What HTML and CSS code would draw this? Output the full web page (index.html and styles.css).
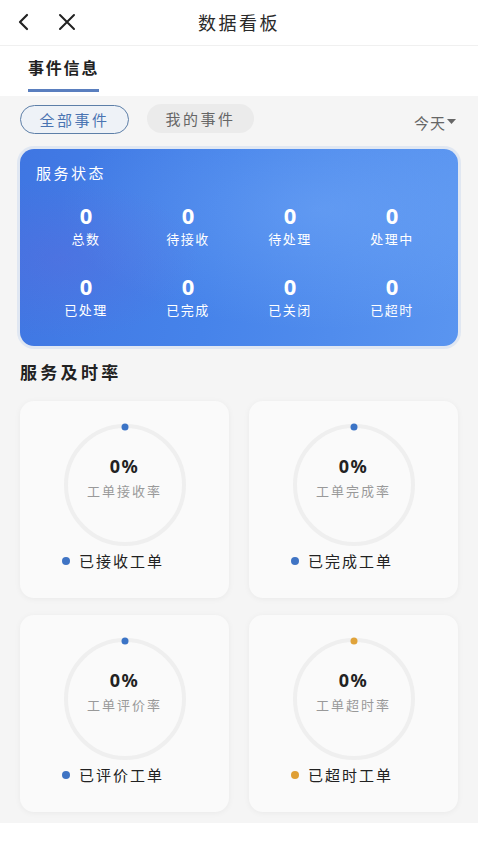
FILE: index.html
```html
<!DOCTYPE html>
<html lang="zh">
<head>
<meta charset="utf-8">
<title>数据看板</title>
<link rel="stylesheet" href="styles.css">
</head>
<body>
<header class="nav">
  <div class="nav-icons">
    <svg class="ico" width="16" height="18" viewBox="0 0 16 18"><path d="M11 2 L4 9 L11 16" fill="none" stroke="#222" stroke-width="2.2" stroke-linecap="round" stroke-linejoin="round"/></svg>
    <svg class="ico close" width="18" height="18" viewBox="0 0 18 18"><path d="M2 2 L16 16 M16 2 L2 16" fill="none" stroke="#222" stroke-width="2" stroke-linecap="round"/></svg>
  </div>
  <h1 class="nav-title">数据看板</h1>
</header>
<nav class="tabs">
  <div class="tab active">事件信息</div>
</nav>
<main class="content">
  <div class="filters">
    <div class="pills">
      <span class="pill on">全部事件</span>
      <span class="pill off">我的事件</span>
    </div>
    <span class="range">今天<svg width="9" height="6" viewBox="0 0 9 6"><path d="M0 0 H9 L4.5 5 Z" fill="#666"/></svg></span>
  </div>

  <section class="status">
    <h2 class="status-title">服务状态</h2>
    <div class="stat-grid">
      <div class="stat"><b>0</b><span>总数</span></div>
      <div class="stat"><b>0</b><span>待接收</span></div>
      <div class="stat"><b>0</b><span>待处理</span></div>
      <div class="stat"><b>0</b><span>处理中</span></div>
      <div class="stat"><b>0</b><span>已处理</span></div>
      <div class="stat"><b>0</b><span>已完成</span></div>
      <div class="stat"><b>0</b><span>已关闭</span></div>
      <div class="stat"><b>0</b><span>已超时</span></div>
    </div>
  </section>

  <h2 class="section-title">服务及时率</h2>
  <div class="rate-grid">
    <div class="rate-card">
      <div class="ring">
        <svg width="124" height="124" viewBox="0 0 124 124"><circle cx="62" cy="62" r="59" fill="none" stroke="#efefef" stroke-width="4"/><circle cx="62" cy="4" r="3.5" fill="#3b74c6"/></svg>
        <div class="ring-text"><b>0%</b><span>工单接收率</span></div>
      </div>
      <div class="legend"><i class="dot blue"></i>已接收工单</div>
    </div>
    <div class="rate-card">
      <div class="ring">
        <svg width="124" height="124" viewBox="0 0 124 124"><circle cx="62" cy="62" r="59" fill="none" stroke="#efefef" stroke-width="4"/><circle cx="62" cy="4" r="3.5" fill="#3b74c6"/></svg>
        <div class="ring-text"><b>0%</b><span>工单完成率</span></div>
      </div>
      <div class="legend"><i class="dot blue"></i>已完成工单</div>
    </div>
    <div class="rate-card">
      <div class="ring">
        <svg width="124" height="124" viewBox="0 0 124 124"><circle cx="62" cy="62" r="59" fill="none" stroke="#efefef" stroke-width="4"/><circle cx="62" cy="4" r="3.5" fill="#3b74c6"/></svg>
        <div class="ring-text"><b>0%</b><span>工单评价率</span></div>
      </div>
      <div class="legend"><i class="dot blue"></i>已评价工单</div>
    </div>
    <div class="rate-card">
      <div class="ring">
        <svg width="124" height="124" viewBox="0 0 124 124"><circle cx="62" cy="62" r="59" fill="none" stroke="#efefef" stroke-width="4"/><circle cx="62" cy="4" r="3.5" fill="#e0a33a"/></svg>
        <div class="ring-text"><b>0%</b><span>工单超时率</span></div>
      </div>
      <div class="legend"><i class="dot orange"></i>已超时工单</div>
    </div>
  </div>
</main>
</body>
</html>
```

FILE: styles.css
```css
* { box-sizing: border-box; margin: 0; padding: 0; }
html, body { background: #ffffff; }
body {
  font-family: "Noto Sans", "Noto Sans CJK SC", sans-serif;
  color: #222;
  width: 478px;
}
.nav {
  height: 46px;
  display: flex;
  align-items: center;
  justify-content: center;
  position: relative;
  background: #fff;
  border-bottom: 1px solid #f0f0f0;
}
.nav-icons {
  position: absolute;
  left: 16px;
  top: 13px;
  display: flex;
  gap: 26px;
  align-items: center;
}
.nav-title {
  font-size: 18px;
  font-weight: 400;
  letter-spacing: 2.5px;
  color: #2a2a2a;
  margin-top: -2px;
}
.tabs {
  height: 50px;
  background: #fff;
  padding-left: 28px;
  display: flex;
}
.tab {
  font-size: 16px;
  font-weight: 600;
  letter-spacing: 1.8px;
  color: #222;
  padding-top: 9px;
  height: 50px;
  border-bottom: 3px solid transparent;
}
.tab.active { border-bottom: 3px solid #5a7fbf; height: 46px; }
.content {
  background: #f5f5f5;
  padding: 9px 20px 11px 20px;
}
.filters {
  display: flex;
  justify-content: space-between;
  align-items: center;
  height: 29px;
}
.pills { display: flex; gap: 18px; }
.pill {
  height: 29px;
  width: 109px;
  border-radius: 15px;
  font-size: 15px;
  letter-spacing: 2.5px;
  display: flex;
  align-items: center;
  justify-content: center;
}
.pill.on {
  border: 1.5px solid #5d7fa8;
  background: #eef2f7;
  color: #4a74b2;
}
.pill.off {
  background: #ebebeb;
  color: #666;
  width: 107px;
  margin-top: -1px;
}
.range {
  font-size: 15px;
  color: #666;
  letter-spacing: 1px;
  margin-top: 5px;
  display: flex;
  align-items: center;
  gap: 1px;
  margin-right: 2px;
}
.status {
  margin-top: 15px;
  height: 197px;
  border-radius: 14px;
  background:
    radial-gradient(ellipse 140px 80px at 40px 110px, rgba(110, 95, 215, 0.25), rgba(110, 95, 215, 0) 100%),
    radial-gradient(ellipse 260px 120px at 300px 60px, rgba(140, 190, 255, 0.3), rgba(140, 190, 255, 0) 100%),
    linear-gradient(100deg, #3f76e2 0%, #4683ea 45%, #5a95f0 100%);
  box-shadow: 0 0 0 3px rgba(200, 215, 240, 0.45);
  padding: 14px 15px 0 15px;
  color: #fff;
}
.status-title {
  font-size: 15px;
  font-weight: 400;
  letter-spacing: 2.5px;
  line-height: 20px;
  margin-left: 1px;
}
.stat-grid {
  margin-top: 20px;
  display: grid;
  grid-template-columns: repeat(4, 1fr);
  row-gap: 26px;
}
.stat {
  display: flex;
  flex-direction: column;
  align-items: center;
}
.stat b {
  font-size: 22px;
  font-weight: 700;
  line-height: 24px;
}
.stat span {
  font-size: 13px;
  letter-spacing: 1.5px;
  line-height: 18px;
  margin-top: 3px;
}
.section-title {
  margin-top: 15px;
  font-size: 17px;
  font-weight: 600;
  letter-spacing: 3.3px;
  line-height: 24px;
  color: #222;
}
.rate-grid {
  margin-top: 16px;
  display: grid;
  grid-template-columns: 209px 209px;
  column-gap: 20px;
  row-gap: 17px;
}
.rate-card {
  height: 197px;
  background: #fafafa;
  border-radius: 14px;
  box-shadow: 0 1px 6px rgba(0, 0, 0, 0.05);
  display: flex;
  flex-direction: column;
  align-items: center;
  padding-top: 22px;
}
.ring {
  position: relative;
  width: 124px;
  height: 124px;
}
.ring svg { display: block; }
.ring-text {
  position: absolute;
  inset: 0;
  display: flex;
  flex-direction: column;
  align-items: center;
  justify-content: center;
}
.ring-text b {
  font-size: 18px;
  font-weight: 700;
  letter-spacing: 1.5px;
  line-height: 22px;
  margin-top: -16px;
  color: #222;
}
.ring-text span {
  font-size: 13px;
  letter-spacing: 2px;
  line-height: 18px;
  margin-top: 5px;
  color: #999;
}
.legend {
  align-self: flex-start;
  margin-left: 42px;
  margin-top: 3px;
  display: flex;
  align-items: center;
  font-size: 15px;
  letter-spacing: 2px;
  line-height: 22px;
  color: #222;
}
.dot {
  width: 8px;
  height: 8px;
  border-radius: 50%;
  margin-right: 9px;
  display: inline-block;
}
.dot.blue { background: #3f74c4; }
.dot.orange { background: #df9f35; }
```
